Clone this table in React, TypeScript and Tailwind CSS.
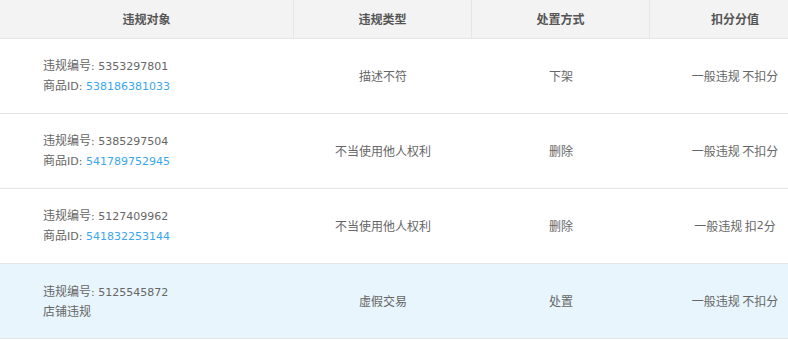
const rows = [
  { no: "5353297801", id: "538186381033", type: "描述不符", action: "下架", score: "不扣分" },
  { no: "5385297504", id: "541789752945", type: "不当使用他人权利", action: "删除", score: "不扣分" },
  { no: "5127409962", id: "541832253144", type: "不当使用他人权利", action: "删除", score: "扣2分" },
  { no: "5125545872", id: null, type: "虚假交易", action: "处置", score: "不扣分" },
];

const Latin = ({ children, className = "" }: { children: React.ReactNode; className?: string }) => (
  <span className={`text-[11px] ${className}`} style={{ fontFamily: '"DejaVu Sans", sans-serif' }}>
    {children}
  </span>
);

export default function App() {
  return (
    <div
      className="w-[788px] h-[342px] overflow-hidden bg-white text-[12px] text-[#666]"
      style={{ fontFamily: '"Noto Sans CJK SC", "DejaVu Sans", sans-serif' }}
    >
      <div className="w-[820px]">
        <div className="flex h-[39px] bg-[#f3f3f3] border-b border-[#e6e6e6] font-bold text-[#555]">
          <div className="w-[294px] flex items-center justify-center border-r border-[#e6e6e6]">违规对象</div>
          <div className="w-[178px] flex items-center justify-center border-r border-[#e6e6e6]">违规类型</div>
          <div className="w-[178px] flex items-center justify-center border-r border-[#e6e6e6]">处置方式</div>
          <div className="w-[170px] flex items-center justify-center">扣分分值</div>
        </div>
        {rows.map((r, i) => (
          <div
            key={r.no}
            className={`flex h-[75px] border-b border-[#e6e6e6] ${i === 3 ? "bg-[#e8f5fc]" : "bg-white"}`}
          >
            <div className="w-[294px] flex flex-col justify-center pl-[43px] leading-[18px]">
              <div>
                违规编号<Latin>: {r.no}</Latin>
              </div>
              {r.id ? (
                <div>
                  商品<Latin>ID: </Latin>
                  <Latin className="text-[#3aa6ee]">{r.id}</Latin>
                </div>
              ) : (
                <div>店铺违规</div>
              )}
            </div>
            <div className="w-[178px] flex items-center justify-center">{r.type}</div>
            <div className="w-[178px] flex items-center justify-center">{r.action}</div>
            <div className="w-[170px] flex items-center justify-center">
              一般违规&nbsp;{r.score === "扣2分" ? <>扣<Latin>2</Latin>分</> : r.score}
            </div>
          </div>
        ))}
      </div>
    </div>
  );
}
